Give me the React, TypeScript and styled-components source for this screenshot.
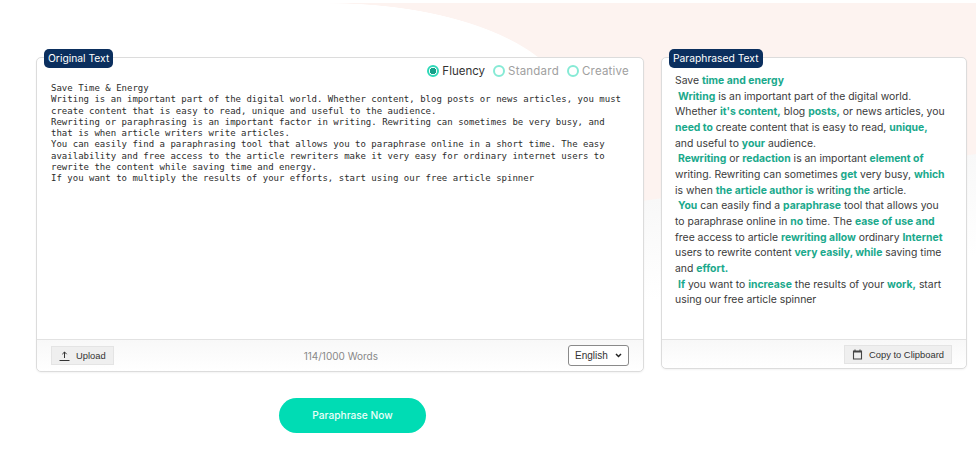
import React from "react";
import styled, { createGlobalStyle } from "styled-components";

const GlobalStyle = createGlobalStyle`
  html, body {
    margin: 0;
    padding: 0;
    background: #fff;
  }
`;

const Page = styled.div`
  width: 979px;
  height: 450px;
  overflow: hidden;
  box-sizing: border-box;
  padding: 57px 12px 0 36px;
  font-family: "Inter", "Liberation Sans", sans-serif;
  background:
    radial-gradient(ellipse 240px 107px at 330px 110px, #fff 0 99.5%, transparent 100%) 0 0 / 100% 240px no-repeat,
    linear-gradient(#fff, #fff) 0 0 / 330px 240px no-repeat,
    linear-gradient(172deg, #fdf3f0 0 239px, #f8f8f8 240px, #fff 340px) 330px 3px / 646px 447px no-repeat,
    #fff;
`;

const Panels = styled.div`
  display: flex;
  align-items: flex-start;
  gap: 17px;
`;

const Panel = styled.section<{ $width: number; $height: number }>`
  position: relative;
  width: ${(p) => p.$width}px;
  height: ${(p) => p.$height}px;
  box-sizing: border-box;
  display: flex;
  flex-direction: column;
  background: #fff;
  border: 1px solid #dcdcdc;
  border-radius: 5px;
  box-shadow: 0 1px 2px rgba(0, 0, 0, 0.05);
`;

const Tag = styled.div<{ $left: number }>`
  position: absolute;
  top: -9px;
  left: ${(p) => p.$left}px;
  height: 19px;
  line-height: 19px;
  padding: 0 4px;
  border-radius: 5px;
  background: #0b2f5e;
  color: #fff;
  font-size: 10.3px;
  white-space: nowrap;
`;

const Body = styled.div`
  flex: 1;
  min-height: 0;
`;

const ModeRow = styled.div`
  display: flex;
  justify-content: flex-end;
  align-items: center;
  height: 25px;
  padding: 0 14px 0 0;
  gap: 8px;
`;

const Mode = styled.div`
  display: flex;
  align-items: center;
  gap: 3px;
`;

const Radio = styled.span<{ $on?: boolean }>`
  width: 12px;
  height: 12px;
  box-sizing: border-box;
  border-radius: 50%;
  border: 2px solid ${(p) => (p.$on ? "#2fd9b8" : "#86ead5")};
  background: ${(p) => (p.$on ? "radial-gradient(circle, #14a088 0 3px, #fff 3.5px)" : "#fff")};
`;

const ModeLabel = styled.span<{ $on?: boolean }>`
  font-size: 11.5px;
  letter-spacing: ${(p) => (p.$on ? 0 : 0.22)}px;
  color: ${(p) => (p.$on ? "#333" : "#a0a0a0")};
`;

const Source = styled.pre`
  margin: 0;
  padding: 0 14px;
  font-family: "DejaVu Sans Mono", "Liberation Mono", monospace;
  font-size: 9px;
  letter-spacing: 0.01px;
  line-height: 11.3px;
  color: #2c2c2c;
  white-space: pre-wrap;
`;

const Result = styled.div`
  padding: 15px 10px 0 13px;
  font-size: 10.4px;
  line-height: 15.65px;
  color: #3a3a3a;
  b {
    font-weight: 700;
    color: #1aa98c;
  }
`;

const Line = styled.div<{ $indent?: boolean }>`
  white-space: nowrap;
  padding-left: ${(p) => (p.$indent ? 3 : 0)}px;
`;

const Footer = styled.div`
  height: 32px;
  box-sizing: border-box;
  display: flex;
  align-items: center;
  justify-content: space-between;
  padding: 0 14px;
  border-top: 1px solid #e2e2e2;
  border-radius: 0 0 5px 5px;
  background: linear-gradient(#f8f8f8, #fff);
`;

const FooterEnd = styled(Footer)`
  height: 29px;
  justify-content: flex-end;
`;

const ToolButton = styled.div`
  display: flex;
  align-items: center;
  height: 19px;
  padding: 0 7px;
  box-sizing: border-box;
  gap: 6px;
  background: #efefef;
  border: 1px solid #e4e4e4;
  font-family: "Liberation Sans", Arial, sans-serif;
  font-size: 9.4px;
  color: #333;
`;

const Words = styled.span`
  font-size: 10px;
  color: #888;
`;

const LanguageBox = styled.div`
  position: relative;
  display: flex;
  svg {
    position: absolute;
    right: 7px;
    top: 8px;
    pointer-events: none;
  }
`;

const Language = styled.select`
  appearance: none;
  box-sizing: border-box;
  width: 61px;
  height: 21px;
  padding: 0 6px;
  border: 1px solid #8a8a8a;
  border-radius: 3px;
  background: #fff;
  font-family: "Liberation Sans", Arial, sans-serif;
  font-size: 10px;
  color: #333;
`;

const Action = styled.div`
  display: flex;
  justify-content: flex-start;
  padding: 26px 0 0 243px;
`;

const Paraphrase = styled.div`
  width: 147px;
  height: 35px;
  border-radius: 18px;
  background: #00dcb4;
  color: #eafff9;
  font-size: 10.2px;
  font-weight: 500;
  line-height: 35px;
  text-align: center;
`;

const sourceText = `Save Time & Energy
Writing is an important part of the digital world. Whether content, blog posts or news articles, you must
create content that is easy to read, unique and useful to the audience.
Rewriting or paraphrasing is an important factor in writing. Rewriting can sometimes be very busy, and
that is when article writers write articles.
You can easily find a paraphrasing tool that allows you to paraphrase online in a short time. The easy
availability and free access to the article rewriters make it very easy for ordinary internet users to
rewrite the content while saving time and energy.
If you want to multiply the results of your efforts, start using our free article spinner`;

const App = () => {
  return (
    <Page>
      <GlobalStyle />
      <Panels>
        <Panel $width={608} $height={315}>
          <Tag $left={7}>Original Text</Tag>
          <Body>
            <ModeRow>
              <Mode>
                <Radio $on />
                <ModeLabel $on>Fluency</ModeLabel>
              </Mode>
              <Mode>
                <Radio />
                <ModeLabel>Standard</ModeLabel>
              </Mode>
              <Mode>
                <Radio />
                <ModeLabel>Creative</ModeLabel>
              </Mode>
            </ModeRow>
            <Source>{sourceText}</Source>
          </Body>
          <Footer>
            <ToolButton>
              <svg width="11" height="12" viewBox="0 0 11 12" fill="none" stroke="#333" strokeWidth="1">
                <path d="M5.5 8V2M3.3 4.2 5.5 2l2.2 2.2M0.5 10.5h10" />
              </svg>
              Upload
            </ToolButton>
            <Words>114/1000 Words</Words>
            <LanguageBox>
              <Language defaultValue="English">
                <option>English</option>
              </Language>
              <svg width="7" height="5" viewBox="0 0 7 5" fill="none" stroke="#222" strokeWidth="1.5">
                <path d="M1 1 3.5 3.5 6 1" />
              </svg>
            </LanguageBox>
          </Footer>
        </Panel>
        <Panel $width={306} $height={312}>
          <Tag $left={7}>Paraphrased Text</Tag>
          <Body>
            <Result>
              <Line>Save <b>time and energy</b></Line>
              <Line $indent><b>Writing</b> is an important part of the digital world.</Line>
              <Line>Whether <b>it's content,</b> blog <b>posts,</b> or news articles, you</Line>
              <Line><b>need to</b> create content that is easy to read, <b>unique,</b></Line>
              <Line>and useful to <b>your</b> audience.</Line>
              <Line $indent><b>Rewriting</b> or <b>redaction</b> is an important <b>element of</b></Line>
              <Line>writing. Rewriting can sometimes <b>get</b> very busy, <b>which</b></Line>
              <Line>is when <b>the article author is</b> writ<b>ing the</b> article.</Line>
              <Line $indent><b>You</b> can easily find a <b>paraphrase</b> tool that allows you</Line>
              <Line>to paraphrase online in <b>no</b> time. The <b>ease of use and</b></Line>
              <Line>free access to article <b>rewriting allow</b> ordinary <b>Internet</b></Line>
              <Line>users to rewrite content <b>very easily, while</b> saving time</Line>
              <Line>and <b>effort.</b></Line>
              <Line $indent><b>If</b> you want to <b>increase</b> the results of your <b>work,</b> start</Line>
              <Line>using our free article spinner</Line>
            </Result>
          </Body>
          <FooterEnd>
            <ToolButton>
              <svg width="11" height="11" viewBox="0 0 11 11" fill="none" stroke="#444" strokeWidth="1.1">
                <path d="M1.5 2h8v8h-8zM3 0.5v2.5M8 0.5v2.5M1.5 3h8" />
              </svg>
              Copy to Clipboard
            </ToolButton>
          </FooterEnd>
        </Panel>
      </Panels>
      <Action>
        <Paraphrase>Paraphrase Now</Paraphrase>
      </Action>
    </Page>
  );
};

export default App;
